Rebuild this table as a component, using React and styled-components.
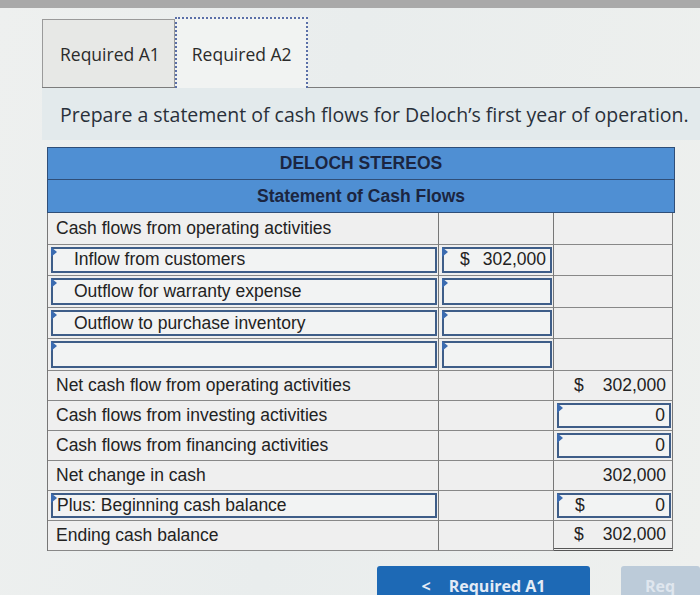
import * as React from "react";
import styled, { createGlobalStyle } from "styled-components";

const Global = createGlobalStyle`
  html, body {
    margin: 0;
    padding: 0;
    background: #eceeee;
    overflow: hidden;
  }
`;

const Page = styled.div`
  width: 700px;
  height: 595px;
  overflow: hidden;
  background: linear-gradient(100deg, #eef0ef 0%, #e9eded 45%, #eef0ee 100%);
  font-family: "Liberation Sans", Arial, sans-serif;
  color: #222;
`;

const TopStrip = styled.div`
  height: 8px;
  background: #a9a9a9;
`;

const Body = styled.div`
  padding-left: 42px;
  padding-top: 9px;
`;

const TabRow = styled.div`
  display: flex;
  align-items: flex-end;
  height: 70px;
  border-bottom: 1px solid #7c7c7c;
`;

const Tab = styled.div`
  display: flex;
  align-items: center;
  box-sizing: border-box;
  height: ${(p) => (p.$active ? "71px" : "68px")};
  padding: 0 14px 0 ${(p) => (p.$active ? "15px" : "17px")};
  font-family: "Open Sans", "DejaVu Sans", sans-serif;
  font-size: 17.5px;
  color: #2b2b2b;
  background: ${(p) => (p.$active ? "#f1f3f2" : "#e7e8e6")};
  border: ${(p) => (p.$active ? "2px dotted #5a6fa8" : "1px solid #9a9a9a")};
  border-bottom: none;
  margin-bottom: ${(p) => (p.$active ? "-1px" : "0")};
`;

const Instruction = styled.div`
  height: 52px;
  display: flex;
  align-items: center;
  padding-left: 18px;
  font-family: "Open Sans", "DejaVu Sans", sans-serif;
  font-size: 19.5px;
  color: #29303a;
  background: #e3eaec;
  white-space: nowrap;
  margin-bottom: 7px;
`;

const Sheet = styled.div`
  margin-left: 5px;
  width: 628px;
`;

const HeaderRow = styled.div`
  box-sizing: border-box;
  height: 33px;
  display: flex;
  align-items: center;
  justify-content: center;
  background: #4f8fd3;
  border: 1px solid #2f4e78;
  border-top: ${(p) => (p.$first ? "1px solid #2f4e78" : "none")};
  font-weight: bold;
  font-size: 17.5px;
  color: #1b2540;
`;

const Grid = styled.div`
  display: grid;
  grid-template-columns: 391px 115px 119px;
  grid-template-rows: repeat(5, 31.6px) repeat(6, 30px);
  border-left: 1px solid #777;
`;

const Cell = styled.div`
  position: relative;
  box-sizing: border-box;
  display: flex;
  align-items: center;
  padding: ${(p) => (p.$input ? "2px 1px 2px 3px" : "0 6px 0 8px")};
  font-size: 17.5px;
  background: #efefef;
  border-right: 1px solid #777;
  border-bottom: ${(p) => (p.$double ? "3px double #555" : "1px solid #888")};
`;

const InputBox = styled.div`
  position: relative;
  box-sizing: border-box;
  flex: 1;
  height: 100%;
  display: flex;
  align-items: center;
  justify-content: ${(p) => (p.$right ? "flex-end" : "flex-start")};
  padding: 0 ${(p) => (p.$right ? "4px" : "8px")} 0 ${(p) => (p.$indent ? "21px" : "4px")};
  border: 2px solid #3e5d88;
  background: #f2f3f3;

  &::before {
    content: "";
    position: absolute;
    left: -2px;
    top: -2px;
    border-top: 5px solid transparent;
    border-bottom: 5px solid transparent;
    border-left: 6px solid #3b6bb0;
  }
`;

const Money = styled.div`
  flex: 1;
  display: flex;
  justify-content: space-between;
  padding-left: ${(p) => p.$pad || "12px"};
`;

const Footer = styled.div`
  display: flex;
  margin-top: 15px;
  padding-left: 335px;
  gap: 31px;
`;

const NavButton = styled.div`
  height: 34px;
  width: ${(p) => (p.$primary ? "217px" : "80px")};
  box-sizing: border-box;
  border-radius: 3px;
  background: ${(p) => (p.$primary ? "#1d69b5" : "#bccbd9")};
  color: ${(p) => (p.$primary ? "#e3ebf6" : "#dfe6ee")};
  font-family: "Open Sans", "DejaVu Sans", sans-serif;
  font-weight: bold;
  font-size: 16px;
  display: flex;
  align-items: flex-start;
  padding-top: 9px;
  justify-content: ${(p) => (p.$primary ? "center" : "flex-start")};
  padding-left: ${(p) => (p.$primary ? "0" : "24px")};
  gap: 18px;
`;

function Amount({ value, sign, pad }) {
  return (
    <Money $pad={pad}>
      <span>{sign ? "$" : ""}</span>
      <span>{value}</span>
    </Money>
  );
}

const rows = [
  { label: "Cash flows from operating activities" },
  { label: "Inflow from customers", labelInput: true, indent: true, c2Input: true, c2: "302,000", c2Sign: true },
  { label: "Outflow for warranty expense", labelInput: true, indent: true, c2Input: true },
  { label: "Outflow to purchase inventory", labelInput: true, indent: true, c2Input: true },
  { label: "", labelInput: true, c2Input: true },
  { label: "Net cash flow from operating activities", c3: "302,000", c3Sign: true },
  { label: "Cash flows from investing activities", c3Input: true, c3: "0" },
  { label: "Cash flows from financing activities", c3Input: true, c3: "0" },
  { label: "Net change in cash", c3: "302,000" },
  { label: "Plus: Beginning cash balance", labelInput: true, c3Input: true, c3: "0", c3Sign: true },
  { label: "Ending cash balance", c3: "302,000", c3Sign: true, double: true },
];

function Row({ r }) {
  return (
    <>
      <Cell $input={r.labelInput}>
        {r.labelInput ? <InputBox $indent={r.indent}>{r.label}</InputBox> : r.label}
      </Cell>
      <Cell $input={r.c2Input}>
        {r.c2Input ? (
          <InputBox $right>{r.c2 && <Amount value={r.c2} sign={r.c2Sign} pad="12px" />}</InputBox>
        ) : null}
      </Cell>
      <Cell $input={r.c3Input} $double={r.double}>
        {r.c3Input ? (
          <InputBox $right>
            {r.c3Sign ? <Amount value={r.c3} sign pad="12px" /> : <Money><span /><span>{r.c3}</span></Money>}
          </InputBox>
        ) : r.c3 ? (
          <Amount value={r.c3} sign={r.c3Sign} pad="12px" />
        ) : null}
      </Cell>
    </>
  );
}

export default function App() {
  return (
    <Page>
      <Global />
      <TopStrip />
      <Body>
        <TabRow>
          <Tab>Required A1</Tab>
          <Tab $active>Required A2</Tab>
        </TabRow>
        <Instruction>Prepare a statement of cash flows for Deloch’s first year of operation.</Instruction>
        <Sheet>
          <HeaderRow $first>DELOCH STEREOS</HeaderRow>
          <HeaderRow>Statement of Cash Flows</HeaderRow>
          <Grid>
            {rows.map((r, i) => (
              <Row key={i} r={r} />
            ))}
          </Grid>
        </Sheet>
        <Footer>
          <NavButton $primary>
            <span>&lt;</span>
            <span>Required A1</span>
          </NavButton>
          <NavButton>Req</NavButton>
        </Footer>
      </Body>
    </Page>
  );
}
